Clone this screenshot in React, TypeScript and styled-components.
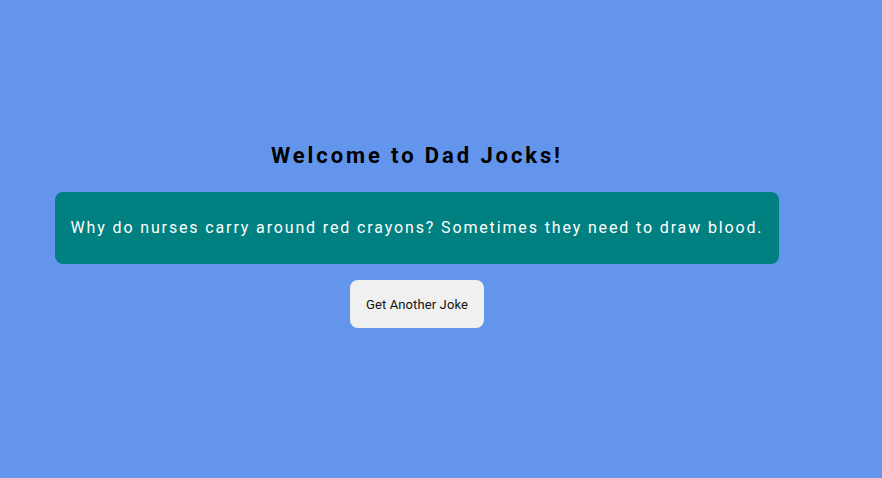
import React from "react";
import styled, { createGlobalStyle } from "styled-components";

const Global = createGlobalStyle`
  html, body { margin: 0; padding: 0; }
  body {
    background: #6495ed;
    font-family: Roboto, "Liberation Sans", sans-serif;
    height: 478px;
  }
`;

const Page = styled.div`
  width: 834px;
  height: 478px;
  display: flex;
  flex-direction: column;
  align-items: center;
  justify-content: flex-start;
  padding-top: 141px;
  box-sizing: border-box;
`;

const Title = styled.h1`
  margin: 0 0 22px;
  font-size: 22px;
  font-weight: 700;
  letter-spacing: 2.9px;
  color: #000;
  line-height: 29px;
`;

const JokeBox = styled.div`
  background: #008080;
  color: #fff;
  border-radius: 8px;
  width: 724px;
  box-sizing: border-box;
  padding: 26px 12px;
  text-align: center;
  font-size: 16px;
  line-height: 20px;
  letter-spacing: 1.86px;
`;

const Button = styled.button`
  margin-top: 16px;
  width: 134px;
  height: 48px;
  border: none;
  border-radius: 8px;
  background: #f0f0f0;
  color: #111;
  font-family: Roboto, "Liberation Sans", sans-serif;
  font-size: 13px;
  letter-spacing: 0.12px;
  cursor: pointer;
`;

export default function App() {
  return (
    <>
      <Global />
      <Page>
        <Title>Welcome to Dad Jocks!</Title>
        <JokeBox>Why do nurses carry around red crayons? Sometimes they need to draw blood.</JokeBox>
        <Button>Get Another Joke</Button>
      </Page>
    </>
  );
}
